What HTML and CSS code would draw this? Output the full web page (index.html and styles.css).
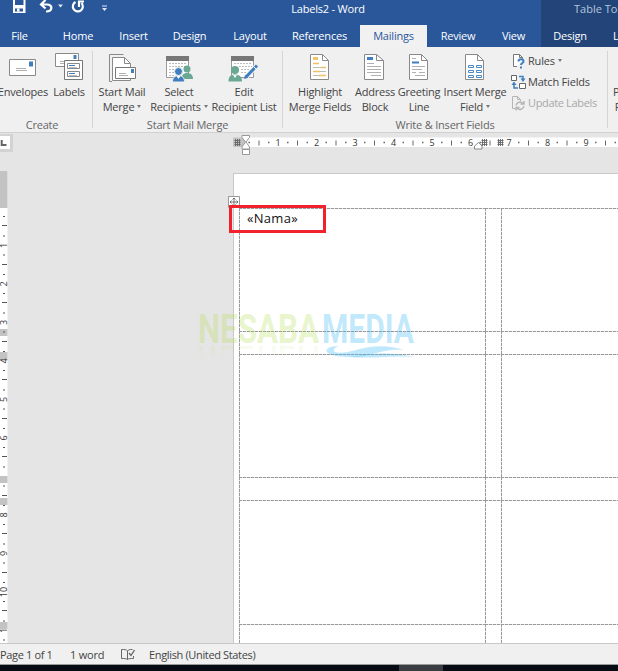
FILE: index.html
```
<!DOCTYPE html>
<html lang="en">
<head>
  <meta charset="UTF-8">
  <meta name="viewport" content="width=device-width, initial-scale=1.0">
  <title>Labels2 - Word</title>
  <link rel="stylesheet" href="styles.css">
</head>

<body>
<div class="window">

  <!-- title bar + tabs -->
  <header class="header">
    <div class="titlebar">
      <svg class="quick" width="120" height="25" viewBox="0 0 120 25">
        <path d="M13 0v13h12.500V0h-2v5h-8.500V0z" fill="#fff"/>
        <path d="M15 8.500h8v3h-8z" fill="#2a579a"/>
        <path d="M17 8.500h2.500v3H17z" fill="#fff"/>
        <path d="M45.500 0l-4.500 4.500 4.500 4M41.500 4.500h5.500c6 0 6 7-1 7" fill="none" stroke="#fff" stroke-width="2.200"/>
        <path d="M58 4.500h5l-2.500 3z" fill="#dfe7f3"/>
        <path d="M81.500 3a5 5 0 1 1-6-1M79 7V1.500h5" fill="none" stroke="#fff" stroke-width="2.200"/>
        <path d="M102 5.500h5v1h-5zM102 8h5l-2.500 3z" fill="#dfe7f3"/>
      </svg>
      <div class="title">Labels2 - Word</div>
      <div class="context">Table Tools</div>
    </div>
    <nav class="tabs">
      <span class="tab file">File</span>
      <span class="tab">Home</span>
      <span class="tab">Insert</span>
      <span class="tab">Design</span>
      <span class="tab">Layout</span>
      <span class="tab">References</span>
      <span class="tab active">Mailings</span>
      <span class="tab">Review</span>
      <span class="tab">View</span>
      <span class="tab">Design</span>
      <span class="tab last">Layout</span>
    </nav>
  </header>

  <!-- ribbon -->
  <div class="ribbon">
    <section class="group create">
      <div class="items">
        <div class="btn">
          <svg width="32" height="32" viewBox="0 0 32 32">
            <path d="M2.500 7.500h26v16h-26z" fill="#fff" stroke="#8a8a8a"/>
            <path d="M22 9.500h4v5h-4z" fill="#3f7fbf"/>
            <path d="M9 16.500h10M9 18.500h11" stroke="#b0b0b0"/>
          </svg>
          <span>Envelopes</span>
        </div>
        <div class="btn">
          <svg width="32" height="32" viewBox="0 0 32 32">
            <path d="M2.500 1.500h23v13h-23z" fill="#fff" stroke="#8a8a8a"/>
            <path d="M20.500 3h3v4h-3z" fill="#3f7fbf"/>
            <path d="M7 9.500h6M7 11.500h5" stroke="#b0b0b0"/>
            <path d="M11.500 8.500h18v19h-18z" fill="#fff" stroke="#777"/>
            <path d="M14.500 11.500h12v5h-12zM14.500 19.500h12v5h-12z" fill="#fff" stroke="#888"/>
            <path d="M16 13.500h6M16 21.500h6" stroke="#3f7fbf"/>
            <path d="M16 15.500h8M16 23.500h8" stroke="#bbb"/>
          </svg>
          <span>Labels</span>
        </div>
      </div>
      <div class="caption">Create</div>
    </section>

    <section class="group start">
      <div class="items">
        <div class="btn">
          <svg width="32" height="32" viewBox="0 0 32 32">
            <path d="M3.500 27V2.500h14M6 29.500h-2.500V25" fill="none" stroke="#8a8a8a"/>
            <path d="M6.500 5.500h12l6 6v17h-18z" fill="#fff" stroke="#8a8a8a"/>
            <path d="M18.500 5.500v6h6" fill="none" stroke="#8a8a8a"/>
            <path d="M9.500 15.500h20v11h-20z" fill="#fff" stroke="#777"/>
            <path d="M25 17h3v4h-3z" fill="#3f7fbf"/>
            <path d="M13 21.500h7M13 23.500h9" stroke="#b0b0b0"/>
          </svg>
          <span>Start Mail<br>Merge<i class="arrow"></i></span>
        </div>
        <div class="btn">
          <svg width="32" height="32" viewBox="0 0 32 32">
            <path d="M3.500 4.500h22v21h-22z" fill="#fff" stroke="#999"/>
            <path d="M3 4h23v5H3z" fill="#777"/>
            <path d="M6 11.500h18M6 14.500h18M6 17.500h10M6 20.500h6M6 23.500h5" stroke="#bbb" stroke-dasharray="2 1"/>
            <circle cx="24" cy="17" r="3.500" fill="#6aa893"/>
            <path d="M18.500 27c0-4 2-6 5.500-6s6 2 6 6z" fill="#6aa893"/>
            <circle cx="15.500" cy="19.500" r="4" fill="#3f7fbf" stroke="#f0f0f0"/>
            <path d="M9.500 30c0-4 2-6.500 6-6.500s6 2.500 6 6.500z" fill="#3f7fbf" stroke="#f0f0f0"/>
            <path d="M13.500 24l2 3 2-3z" fill="#fff"/>
          </svg>
          <span>Select<br>Recipients<i class="arrow"></i></span>
        </div>
        <div class="btn">
          <svg width="32" height="32" viewBox="0 0 32 32">
            <path d="M3.500 4.500h22v21h-22z" fill="#fff" stroke="#999"/>
            <path d="M3 4h23v5H3z" fill="#777"/>
            <path d="M6 11.500h18M11 14.500h13M13 17.500h10M13 20.500h8" stroke="#bbb" stroke-dasharray="2 1"/>
            <circle cx="7" cy="18" r="4" fill="#6aa893"/>
            <path d="M.500 29.500c0-5 2-7 6.500-7s7 2 7 7z" fill="#6aa893"/>
            <path d="M5 23l2 3 2-3z" fill="#fff"/>
            <path d="M17.500 25.500L29 13.500" stroke="#f0f0f0" stroke-width="5"/>
            <path d="M18 25L29 13.500" stroke="#3f7fbf" stroke-width="3"/>
            <path d="M16 27l1-4 3 3z" fill="#3f7fbf"/>
            <path d="M25.500 14.500l3 3" stroke="#fff"/>
          </svg>
          <span>Edit<br>Recipient List</span>
        </div>
      </div>
      <div class="caption">Start Mail Merge</div>
    </section>

    <section class="group write">
      <div class="items">
        <div class="btn">
          <svg width="32" height="32" viewBox="0 0 32 32">
            <path d="M6.500 2.500h12l6 6v19h-18z" fill="#fff" stroke="#8a8a8a"/>
            <path d="M18.500 2.500v6h6" fill="none" stroke="#8a8a8a"/>
            <path d="M9 5h5v3H9z" fill="#f0c568"/>
            <path d="M9 11.500h6M17 15.500h5M9 19.500h7M15 23.500h7" stroke="#eec068" stroke-width="1.500"/>
            <path d="M9 15.500h8M16 19.500h6M9 23.500h6" stroke="#bbb"/>
          </svg>
          <span>Highlight<br>Merge Fields</span>
        </div>
        <div class="btn">
          <svg width="32" height="32" viewBox="0 0 32 32">
            <path d="M5.500 2.500h12l7 6v19h-19z" fill="#fff" stroke="#8a8a8a"/>
            <path d="M17.500 2.500v6h7" fill="none" stroke="#8a8a8a"/>
            <path d="M8 5h6v3H8z" fill="#3f7fbf"/>
            <path d="M8 11.500h7M8 14.500h14M8 17.500h14M8 20.500h14M12 23.500h10" stroke="#b0b0b0"/>
          </svg>
          <span>Address<br>Block</span>
        </div>
        <div class="btn">
          <svg width="32" height="32" viewBox="0 0 32 32">
            <path d="M6.500 2.500h12l6 6v19h-18z" fill="#fff" stroke="#8a8a8a"/>
            <path d="M18.500 2.500v6h6" fill="none" stroke="#8a8a8a"/>
            <path d="M9 10.500h7" stroke="#3f7fbf" stroke-width="2"/>
            <path d="M9 6.500h4M9 14.500h13M9 17.500h10M9 20.500h4M16 20.500h6M12 23.500h10" stroke="#b0b0b0"/>
          </svg>
          <span>Greeting<br>Line</span>
        </div>
        <div class="btn">
          <svg width="32" height="32" viewBox="0 0 32 32">
            <path d="M6.500 2.500h12l6 6v19h-18z" fill="#fff" stroke="#8a8a8a"/>
            <path d="M18.500 2.500v6h6" fill="none" stroke="#8a8a8a"/>
            <path d="M9.500 13.500h5v2h-5zM17.500 13.500h5v2h-5zM9.500 18.500h5v2h-5zM17.500 18.500h5v2h-5zM9.500 23.500h5v2h-5zM17.500 23.500h5v2h-5z" fill="#fff" stroke="#4a8ac6"/>
          </svg>
          <span>Insert Merge<br>Field<i class="arrow"></i></span>
        </div>
        <div class="small-list">
          <div class="small">
            <svg width="16" height="16" viewBox="0 0 16 16">
              <path d="M6 13.500H2.500v-12h6l3 3V6M8.500 1.500v3h3" fill="#fff" stroke="#777"/>
              <path d="M7.500 8.500c0-3 5-3 5 0 0 1.500-2.500 1.500-2.500 3.500M10 13.500v2" fill="none" stroke="#3f7fbf" stroke-width="2"/>
            </svg>
            <span>Rules<i class="arrow"></i></span>
          </div>
          <div class="small">
            <svg width="16" height="16" viewBox="0 0 16 16">
              <path d="M.500 1.500h5v5h-5zM8.500 9.500h6v5h-6z" fill="#fff" stroke="#666"/>
              <path d="M8 2.500h4V5M7 14H3V10" fill="none" stroke="#3f7fbf" stroke-width="1.500"/>
              <path d="M9.500 4.500h5l-2.500 3.500zM.500 11h5L3 7.500z" fill="#3f7fbf"/>
            </svg>
            <span>Match Fields</span>
          </div>
          <div class="small disabled">
            <svg width="16" height="16" viewBox="0 0 16 16">
              <path d="M4 13.500H1.500v-12h5l3 3V6M6.500 1.500v3h3" fill="none" stroke="#b5b5b5"/>
              <path d="M5 10.500a4 4 0 0 1 7-2M13 11a4 4 0 0 1-7 2M13 6v3h-3.500M5 15.500v-3h3.500" fill="none" stroke="#b5b5b5" stroke-width="1.500"/>
            </svg>
            <span>Update Labels</span>
          </div>
        </div>
      </div>
      <div class="caption">Write &amp; Insert Fields</div>
    </section>

    <section class="group preview">
      <div class="items">
        <div class="btn cut"><span>Preview<br>Results</span></div>
      </div>
    </section>
  </div>

  <!-- document -->
  <main class="workspace">
    <div class="ruler-row">
      <div class="tab-stop">
        <svg width="9" height="12" viewBox="0 0 9 12"><path d="M1.700 3v5H6.500" fill="none" stroke="#666" stroke-width="2"/></svg>
      </div>
      <svg class="hruler" id="hruler" width="385" height="22" viewBox="233 134 385 22">
        <path d="M233 137.500h14v9.500h-14z" fill="#c3c3c3"/>
        <path d="M247 137.500h371v9.500H247z" fill="#fff"/>
      </svg>
    </div>

    <div class="body-row">
      <svg class="vruler" id="vruler" width="8" height="472" viewBox="0 171 8 472">
        <path d="M0 171h7.500v472H0z" fill="#fff"/>
        <path d="M0 171h7.500v37H0zM0 329h7.500v7H0zM0 352h7.500v8H0zM0 476h7.500v7H0zM0 498h7.500v7H0zM0 622h7.500v7H0z" fill="#c3c3c3"/>
      </svg>
      <div class="page">
        <div class="label-sheet">
          <div class="cell">«Nama»</div><div class="cell"></div><div class="cell"></div>
          <div class="cell"></div><div class="cell"></div><div class="cell"></div>
          <div class="cell"></div><div class="cell"></div><div class="cell"></div>
          <div class="cell"></div><div class="cell"></div><div class="cell"></div>
          <div class="cell"></div><div class="cell"></div><div class="cell"></div>
          <div class="cell"></div><div class="cell"></div><div class="cell"></div>
        </div>
      </div>
    </div>

    <!-- things floating over the page -->
    <svg class="handle" width="12" height="12" viewBox="0 0 12 12">
      <path d="M.500.500h11v11H.500z" fill="#fff" stroke="#999"/>
      <path d="M6 2v8M2 6h8M4.500 3.500L6 2l1.500 1.500M4.500 8.500L6 10l1.500-1.500M3.500 4.500L2 6l1.500 1.500M8.500 4.500L10 6 8.500 7.500" fill="none" stroke="#555" stroke-width=".8"/>
    </svg>
    <div class="highlight"></div>
    <svg class="watermark" width="230" height="60" viewBox="195 306 230 60">
      <defs>
        <linearGradient id="fade" x1="0" y1="344" x2="0" y2="360" gradientUnits="userSpaceOnUse">
          <stop offset="0" stop-color="#b4dc50" stop-opacity=".12"/>
          <stop offset="1" stop-color="#b4dc50" stop-opacity="0"/>
        </linearGradient>
      </defs>
      <text class="wm green" x="198" y="343" textLength="121" lengthAdjust="spacingAndGlyphs">NESABA</text>
      <text class="wm blue" x="322" y="343" textLength="92" lengthAdjust="spacingAndGlyphs">MEDIA</text>
      <!-- faded reflection -->
      <path d="M199 346h4v12h-4zM211 346h4v12h-4zM221 346h13v3h-9v9h-4zM240 346h13v3h-13zM259 346h4v12h-4zM272 346h4v12h-4zM280 346h14v3h-10v9h-4zM299 346h4v12h-4zM314 346h4v12h-4z" fill="url(#fade)"/>
      <path class="blue" d="M338 346c-8 0-13 3-11 6 3 4 14 5 24 5 22 0 30-9 53-7-18-6-34-4-48 0-10 3-23 4-22 0 0-2 3-3 4-4z"/>
      <path class="blue" d="M348 357c18-2 34-7 67 0-20-2-38 2-67 0z"/>
    </svg>
  </main>

  <footer class="status">
    <span class="page-count">Page 1 of 1</span>
    <span class="words">1 word</span>
    <svg width="14" height="13" viewBox="0 0 14 13">
      <path d="M6.500 11.500c-1-1-3-1-6-1v-9c3 0 5 0 6 1.500zM6.500 3c1-1.500 2-1.500 5-1.500M6.500 11.500c1-1 3-1 6-1V8" fill="none" stroke="#666"/>
      <path d="M8 5l2 2.500L13.500 2" fill="none" stroke="#666" stroke-width="1.300"/>
    </svg>
    <span class="language">English (United States)</span>
  </footer>
  <div class="taskbar"><div class="task"></div></div>
</div>

<script>
  const NS = 'http://www.w3.org/2000/svg';
  const STEP = 38.5; // pixels per centimetre

  function add(parent, name, attrs, text) {
    const el = document.createElementNS(NS, name);
    for (const key in attrs) el.setAttribute(key, attrs[key]);
    if (text) el.textContent = text;
    parent.appendChild(el);
  }

  // horizontal ruler
  const h = document.getElementById('hruler');
  for (let i = 0; i < 10; i++) {
    const x = 239.5 + i * STEP;
    if (i > 0) add(h, 'text', { x: x, y: 146, class: 'num' }, String(i));
    add(h, 'path', { d: `M${x + 9} 142.500h1.500M${x + 28.5} 142.500h1.500`, stroke: '#666', 'stroke-width': 1.5 });
    add(h, 'path', { d: `M${x + 19.5} 140.500v5`, stroke: '#666' });
  }
  // column markers and indents
  for (const x of [235.5, 482.5, 498.5]) {
    add(h, 'path', { d: `M${x} 139v7M${x + 2} 139v7M${x + 4} 139v7M${x - 1} 140.500h6M${x - 1} 142.500h6M${x - 1} 144.500h6`, stroke: '#666', 'stroke-width': 0.9 });
  }
  add(h, 'path', { d: 'M242 135.500h7.500v2l-3.500 4.500 3.500 5v2H242v-2l3.500-5-3.500-4.500zM242.500 149.500h7v5h-7z', fill: '#fff', stroke: '#999' });
  add(h, 'path', { d: 'M474.500 149v-3l4-3.500 3.500 3.500v3z', fill: '#fff', stroke: '#888' });

  // vertical ruler
  const v = document.getElementById('vruler');
  for (let i = 0; i < 12; i++) {
    const y = 207 + i * STEP;
    if (i > 0 && i !== 7) add(v, 'text', { transform: `translate(6.5 ${y}) rotate(-90)`, class: 'num' }, i === 11 ? '1' : String(i));
    add(v, 'path', { d: `M3 ${y + 9.5}h2M3 ${y + 29}h2`, stroke: '#555', 'stroke-width': 1 });
    add(v, 'path', { d: `M2 ${Math.round(y + 19) - 0.5}h5`, stroke: '#555' });
  }
</script>
</body>
</html>
```
FILE: styles.css
```
* {
  box-sizing: border-box;
}
body {
  margin: 0;
  font-family: "Open Sans", "Noto Sans", sans-serif;
  font-size: 11px;
  letter-spacing: -.2px;
  color: #444;
}
.window {
  display: flex;
  flex-direction: column;
  width: 618px;
  height: 671px;
  overflow: hidden;
  background: #e5e5e5;
}

/* title bar and tabs */
.header {
  flex: none;
  height: 47px;
  color: #fff;
  background: linear-gradient(to right, #2a579a 541px, #224478 541px);
}
.titlebar {
  display: grid;
  grid-template-columns: 120px 416px 1fr;
  height: 25px;
  line-height: 18px;
  white-space: nowrap;
}
.title {
  text-align: center;
}
.context {
  padding-left: 38px;
  letter-spacing: 0;
  color: #b5c4dc;
}
.tabs {
  display: grid;
  grid-template-columns: 47px 62px 49px 63px 58px 81px 67px 62px 49px 64px 1fr;
  height: 22px;
  line-height: 22px;
}
.tab {
  text-align: center;
  white-space: nowrap;
}
.file {
  padding-right: 8px;
}
.active {
  color: #2a579a;
  background: #f1f1f1;
}
.last {
  padding-left: 11px;
  text-align: left;
}

/* ribbon */
.ribbon {
  display: flex;
  flex: none;
  height: 86px;
  background: #f0f0f0;
  border-bottom: 1px solid #d0d0d0;
}
.group {
  display: flex;
  flex-direction: column;
  flex: none;
  margin: 4px 0 4px;
  border-right: 1px solid #d4d4d4;
}
.items {
  display: flex;
  flex: none;
  height: 65px;
}
.btn {
  display: flex;
  flex-direction: column;
  flex: none;
  align-items: center;
  padding-top: 1px;
  line-height: 15px;
  text-align: center;
  white-space: nowrap;
}
.btn svg {
  flex: none;
}
.caption {
  line-height: 17px;
  text-align: center;
  color: #666;
}
.create {
  width: 93px;
}
.create .btn {
  width: 46px;
}
.create .caption {
  padding-right: 8px;
}
.start {
  width: 190px;
}
.start .btn:nth-child(1) { width: 58px; }
.start .btn:nth-child(2) { width: 56px; }
.start .btn:nth-child(3) { width: 74px; }
.write {
  width: 325px;
}
.write .btn:nth-child(1) { width: 74px; }
.write .btn:nth-child(2) { width: 36px; }
.write .btn:nth-child(3) { width: 52px; }
.write .btn:nth-child(4) { width: 60px; }
.preview {
  border: none;
}
.cut {
  padding: 33px 0 0 5px;
}
.arrow {
  display: inline-block;
  margin-left: 3px;
  border: 2.5px solid transparent;
  border-top: 3px solid #777;
  border-bottom: none;
  vertical-align: 3px;
}
.small-list {
  display: flex;
  flex-direction: column;
  margin-top: -1px;
  padding-left: 6px;
}
.small {
  display: flex;
  align-items: center;
  gap: 1px;
  height: 21px;
  line-height: 19px;
  white-space: nowrap;
}
.disabled {
  letter-spacing: -.35px;
  color: #a8a8a8;
}

/* document area */
.workspace {
  position: relative;
  display: flex;
  flex-direction: column;
  flex: none;
  height: 510px;
  overflow: hidden;
}
.ruler-row {
  display: flex;
  justify-content: space-between;
  flex: none;
  height: 38px;
  padding-top: 1px;
}
.tab-stop {
  width: 13px;
  height: 18px;
  padding-top: 1px;
  background: #fff;
  border: solid #d3d3d3;
  border-width: 2px 3px 3px 0;
}
.tab-stop svg {
  display: block;
}
.num {
  font-size: 9px;
  letter-spacing: 0;
  text-anchor: middle;
  fill: #333;
}
.body-row {
  display: flex;
  justify-content: space-between;
  height: 472px;
}
.page {
  width: 385px;
  height: 470px;
  margin-top: 2px;
  padding: 34px 0 0 5px;
  background: #fff;
  border: solid #c9c9c9;
  border-width: 1px 0 0 1px;
}
.label-sheet {
  display: grid;
  grid-template-columns: 246px 16px 1fr;
  grid-template-rows: 123px 23px 123px 23px 124px 1fr;
  height: 435px;
}
.cell {
  padding: 1px 0 0 8px;
  font-size: 13px;
  line-height: 18px;
  letter-spacing: .3px;
  color: #111;
  background:
    repeating-linear-gradient(to right, #9a9a9a 0 3px, #e0e0e0 3px 4px) top left / 100% 1px no-repeat,
    repeating-linear-gradient(to bottom, #9a9a9a 0 3px, #e0e0e0 3px 4px) top left / 1px 100% no-repeat;
}

/* overlays on the page */
.handle {
  position: absolute;
  left: 228px;
  top: 63px;
}
.highlight {
  position: absolute;
  left: 229px;
  top: 72px;
  width: 97px;
  height: 28px;
  border: 3px solid #f0222b;
}
.watermark {
  position: absolute;
  left: 195px;
  top: 173px;
}
.wm {
  font-family: Roboto, sans-serif;
  font-size: 41px;
  font-weight: 700;
  letter-spacing: 0;
}
.green {
  fill: rgba(180, 220, 80, .3);
}
.blue {
  fill: rgba(60, 185, 245, .33);
}

/* status bar */
.status {
  display: flex;
  align-items: center;
  flex: none;
  height: 22px;
  background: #f0f0f0;
  border-top: 1px solid #c8c8c8;
  border-bottom: 1px solid #999;
  letter-spacing: -.35px;
  white-space: nowrap;
}
.page-count {
  width: 70px;
}
.words {
  width: 51px;
  letter-spacing: -.2px;
}
.language {
  margin-left: 14px;
}
.taskbar {
  flex: 1;
  background: #060b14;
}
.task {
  width: 44px;
  height: 100%;
  margin-left: 399px;
  background: #3a3d41;
}
```
